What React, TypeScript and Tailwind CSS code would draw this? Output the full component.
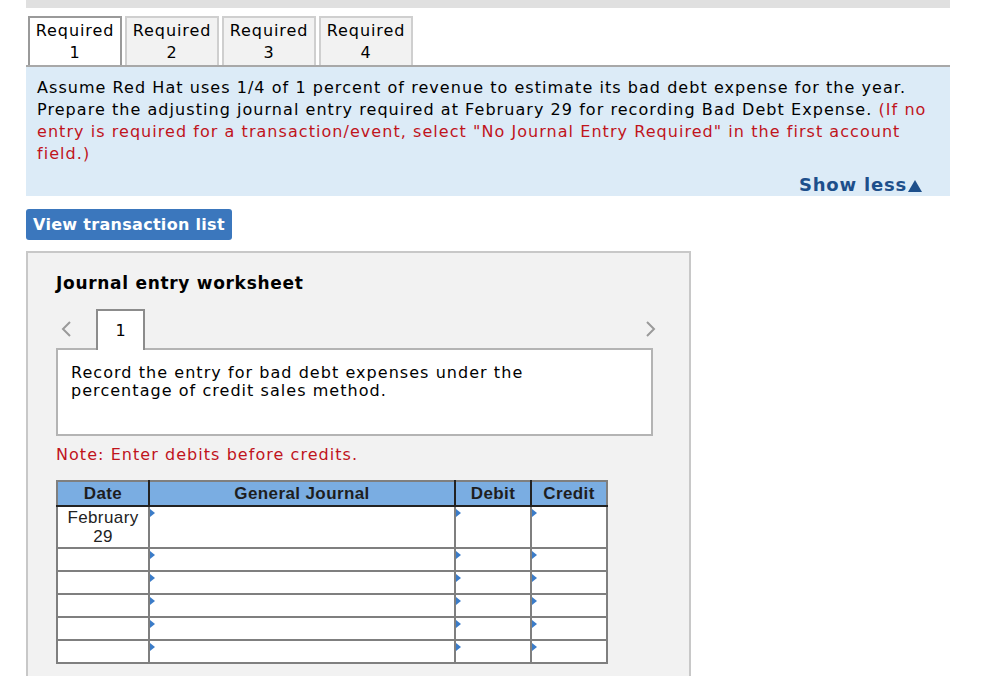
import React from 'react';

const tabs = ['1', '2', '3', '4'];
const emptyRows = [0, 1, 2, 3, 4];

const Marker = () => (
  <span className="absolute left-0 top-[2px] h-0 w-0 border-y-[4px] border-l-[5px] border-y-transparent border-l-[#3b7cc8]" />
);

const Cell = ({ children, marker, className }: { children?: React.ReactNode; marker?: boolean; className?: string }) => (
  <td className={'relative border-2 border-[#7f7f7f] p-0 align-top ' + (className ?? '')}>
    {marker && <Marker />}
    {children}
  </td>
);

const App = () => {
  return (
    <div
      className="h-[676px] overflow-hidden bg-white pl-[26px] text-black"
      style={{ fontFamily: '"DejaVu Sans", Verdana, sans-serif' }}
    >
      <div className="h-2 w-[924px] bg-[#e0e0e0]" />

      {/* requirement tabs */}
      <div className="mt-2 flex w-[924px] gap-[3px] pl-[2px]">
        {tabs.map((t, i) => (
          <div
            key={t}
            className={
              'flex h-[49px] w-[94px] flex-col items-center justify-center border-2 border-b-0 text-[16px] leading-[22px] tracking-[0.9px] ' +
              (i === 0 ? 'border-[#9a9a9a] bg-white' : 'border-[#cfcfcf] bg-[#f2f2f2]')
            }
          >
            <span>Required</span>
            <span>{t}</span>
          </div>
        ))}
      </div>

      <div className="w-[924px] border-t-2 border-[#a8a8a8] bg-[#dcebf7] pl-[11px] pr-[28px] pt-[10px]">
        <p className="-mr-[24px] whitespace-nowrap text-[16px] leading-[22px] tracking-[1.05px]">
          Assume Red Hat uses 1/4 of 1 percent of revenue to estimate its bad debt expense for the year.
          <br />
          Prepare the adjusting journal entry required at February 29 for recording Bad Debt Expense.{' '}
          <span className="text-[#c0141c]">
            (If no
            <br />
            entry is required for a transaction/event, select "No Journal Entry Required" in the first account
            <br />
            field.)
          </span>
        </p>
        <div className="flex items-center justify-end pt-[9px] text-[18px] font-bold leading-[22px] tracking-[0.8px] text-[#1d4f8b]">
          Show less
          <svg width="14" height="12" viewBox="0 0 14 12" className="ml-[1px] mt-[1px]">
            <path d="M7 0 L14 12 L0 12 Z" fill="#1d4f8b" />
          </svg>
        </div>
      </div>

      <button className="mt-[13px] flex h-[31px] items-center rounded-[3px] bg-[#3b77bd] px-[7px] text-[16px] font-bold tracking-[0.3px] text-white">
        View transaction list
      </button>

      {/* worksheet */}
      <div className="mt-[11px] h-[480px] w-[665px] border-2 border-[#c8c8c8] bg-[#f2f2f2] pl-[28px] pt-[20px]">
        <h2 className="text-[17px] font-bold leading-[20px] tracking-[0.7px]">Journal entry worksheet</h2>

        <div className="mt-[16px] flex h-[40px] w-[597px] items-center">
          <svg width="12" height="18" viewBox="0 0 12 18" className="ml-[4px]">
            <path d="M10 2 L3 9 L10 16" fill="none" stroke="#9a9a9a" strokeWidth="2" />
          </svg>
          <div className="relative z-10 ml-[24px] flex h-[41px] w-[49px] items-center justify-center self-start border-2 border-b-0 border-[#8c8c8c] bg-white text-[16px]">
            1
          </div>
          <div className="flex-1" />
          <svg width="12" height="18" viewBox="0 0 12 18" className="mr-[-4px]">
            <path d="M2 2 L9 9 L2 16" fill="none" stroke="#9a9a9a" strokeWidth="2" />
          </svg>
        </div>

        <div className="-mt-[1px] h-[88px] w-[597px] border-2 border-[#b4b4b4] bg-white pl-[13px] pt-[14px] text-[16px] leading-[18px] tracking-[1.05px]">
          Record the entry for bad debt expenses under the
          <br />
          percentage of credit sales method.
        </div>

        <p className="mt-[9px] text-[16px] leading-[20px] tracking-[1.05px] text-[#c0141c]">
          Note: Enter debits before credits.
        </p>

        <table
          className="mt-[15px] w-[550px] table-fixed border-collapse border-2 border-[#7f7f7f] bg-white text-[17px] leading-[19px] tracking-[0.4px]"
          style={{ fontFamily: '"Liberation Sans", Arial, sans-serif' }}
        >
          <colgroup>
            <col className="w-[92px]" />
            <col className="w-[306px]" />
            <col className="w-[76px]" />
            <col className="w-[76px]" />
          </colgroup>
          <thead>
            <tr className="h-[25px] bg-[#7aade2] font-bold text-[#1e1e1e]">
              <th className="border-x-2 border-b-2 border-[#222] border-l-[#7f7f7f] border-t-[#7f7f7f] p-0">Date</th>
              <th className="border-x-2 border-b-2 border-[#222] border-t-[#7f7f7f] p-0">General Journal</th>
              <th className="border-x-2 border-b-2 border-[#222] border-t-[#7f7f7f] p-0">Debit</th>
              <th className="border-x-2 border-b-2 border-[#222] border-r-[#7f7f7f] border-t-[#7f7f7f] p-0">Credit</th>
            </tr>
          </thead>
          <tbody>
            <tr className="h-[42px]">
              <Cell className="text-center text-[#222]">
                <div className="pt-[1px]">February</div>
                <div>29</div>
              </Cell>
              <Cell marker />
              <Cell marker />
              <Cell marker />
            </tr>
            {emptyRows.map((r) => (
              <tr key={r} className="h-[23px]">
                <Cell />
                <Cell marker />
                <Cell marker />
                <Cell marker />
              </tr>
            ))}
          </tbody>
        </table>
      </div>
    </div>
  );
};

export default App;
